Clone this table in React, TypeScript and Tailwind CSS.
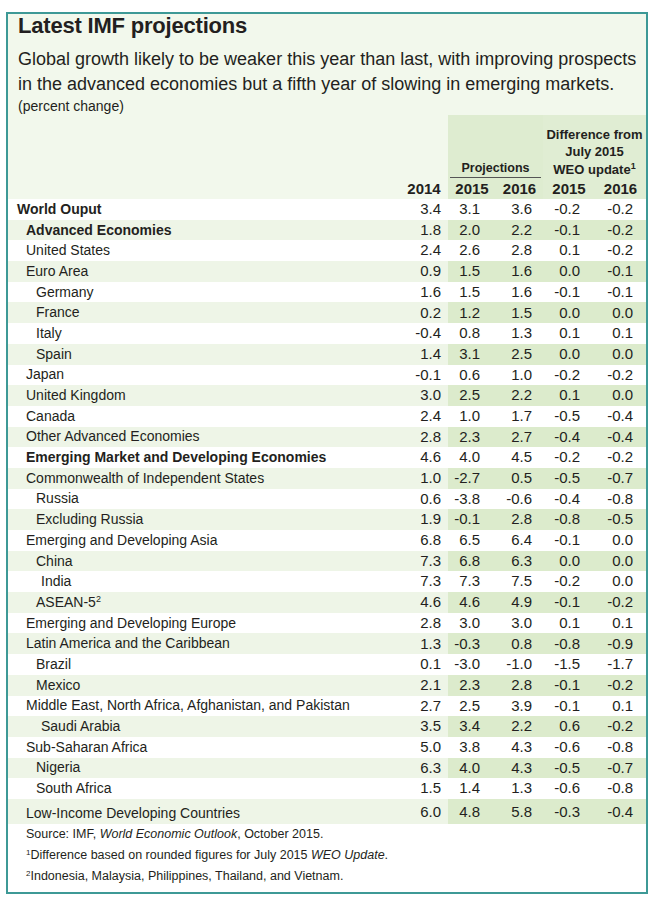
type Row = {
  label: string;
  level: 0 | 1 | 2 | 3;
  bold?: boolean;
  sup?: string;
  v: [string, string, string, string, string];
};

const rows: Row[] = [
  { label: 'World Ouput', level: 0, bold: true, v: ['3.4', '3.1', '3.6', '-0.2', '-0.2'] },
  { label: 'Advanced Economies', level: 1, bold: true, v: ['1.8', '2.0', '2.2', '-0.1', '-0.2'] },
  { label: 'United States', level: 1, v: ['2.4', '2.6', '2.8', '0.1', '-0.2'] },
  { label: 'Euro Area', level: 1, v: ['0.9', '1.5', '1.6', '0.0', '-0.1'] },
  { label: 'Germany', level: 2, v: ['1.6', '1.5', '1.6', '-0.1', '-0.1'] },
  { label: 'France', level: 2, v: ['0.2', '1.2', '1.5', '0.0', '0.0'] },
  { label: 'Italy', level: 2, v: ['-0.4', '0.8', '1.3', '0.1', '0.1'] },
  { label: 'Spain', level: 2, v: ['1.4', '3.1', '2.5', '0.0', '0.0'] },
  { label: 'Japan', level: 1, v: ['-0.1', '0.6', '1.0', '-0.2', '-0.2'] },
  { label: 'United Kingdom', level: 1, v: ['3.0', '2.5', '2.2', '0.1', '0.0'] },
  { label: 'Canada', level: 1, v: ['2.4', '1.0', '1.7', '-0.5', '-0.4'] },
  { label: 'Other Advanced Economies', level: 1, v: ['2.8', '2.3', '2.7', '-0.4', '-0.4'] },
  { label: 'Emerging Market and Developing Economies', level: 1, bold: true, v: ['4.6', '4.0', '4.5', '-0.2', '-0.2'] },
  { label: 'Commonwealth of Independent States', level: 1, v: ['1.0', '-2.7', '0.5', '-0.5', '-0.7'] },
  { label: 'Russia', level: 2, v: ['0.6', '-3.8', '-0.6', '-0.4', '-0.8'] },
  { label: 'Excluding Russia', level: 2, v: ['1.9', '-0.1', '2.8', '-0.8', '-0.5'] },
  { label: 'Emerging and Developing Asia', level: 1, v: ['6.8', '6.5', '6.4', '-0.1', '0.0'] },
  { label: 'China', level: 2, v: ['7.3', '6.8', '6.3', '0.0', '0.0'] },
  { label: 'India', level: 3, v: ['7.3', '7.3', '7.5', '-0.2', '0.0'] },
  { label: 'ASEAN-5', level: 2, sup: '2', v: ['4.6', '4.6', '4.9', '-0.1', '-0.2'] },
  { label: 'Emerging and Developing Europe', level: 1, v: ['2.8', '3.0', '3.0', '0.1', '0.1'] },
  { label: 'Latin America and the Caribbean', level: 1, v: ['1.3', '-0.3', '0.8', '-0.8', '-0.9'] },
  { label: 'Brazil', level: 2, v: ['0.1', '-3.0', '-1.0', '-1.5', '-1.7'] },
  { label: 'Mexico', level: 2, v: ['2.1', '2.3', '2.8', '-0.1', '-0.2'] },
  { label: 'Middle East, North Africa, Afghanistan, and Pakistan', level: 1, v: ['2.7', '2.5', '3.9', '-0.1', '0.1'] },
  { label: 'Saudi Arabia', level: 3, v: ['3.5', '3.4', '2.2', '0.6', '-0.2'] },
  { label: 'Sub-Saharan Africa', level: 1, v: ['5.0', '3.8', '4.3', '-0.6', '-0.8'] },
  { label: 'Nigeria', level: 2, v: ['6.3', '4.0', '4.3', '-0.5', '-0.7'] },
  { label: 'South Africa', level: 2, v: ['1.5', '1.4', '1.3', '-0.6', '-0.8'] },
  { label: 'Low-Income Developing Countries', level: 1, v: ['6.0', '4.8', '5.8', '-0.3', '-0.4'] },
];

const indent = ['pl-[9px]', 'pl-[18px]', 'pl-[28px]', 'pl-[33px]'];
const colW = ['w-[48px]', 'w-[48px]', 'w-[47px]', 'w-[52px]', 'w-[51px]'];
const colPad = ['pr-[7px]', 'pr-[16px]', 'pr-[11px]', 'pr-[15px]', 'pr-[13px]'];

export default function App() {
  return (
    <div className="min-h-screen bg-white pl-[6px] pt-[12px] font-['Liberation_Sans',Arial,sans-serif] text-[#231f20]">
      <div className="w-[642px] border-2 border-[#3d9996]">
        <div className="bg-[#f2f8ec] pl-[10px] pr-[2px]">
          <h1 className="text-[22px] font-bold leading-[24px] tracking-[-0.2px]">Latest IMF projections</h1>
          <p className="mt-[9px] text-[18px] leading-[25px]">
            Global growth likely to be weaker this year than last, with improving prospects
            <br />
            in the advanced economies but a fifth year of slowing in emerging markets.
          </p>
          <p className="text-[14px] leading-[18px]">(percent change)</p>
        </div>

        {/* header */}
        <div className="flex h-[84px] bg-[#f2f8ec] text-[15px] font-bold">
          <div className="w-[392px]" />
          <div className={`${colW[0]} flex flex-col justify-end`}>
            <div className="h-[21px] text-center leading-[21px]">2014</div>
          </div>
          <div className="flex w-[95px] flex-col justify-end bg-[#deecd0]">
            <div className="mx-[2px] border-b border-[#555] text-center text-[12.5px] leading-[17px]">Projections</div>
            <div className="flex">
              <div className={`${colW[1]} h-[21px] text-center leading-[21px]`}>2015</div>
              <div className={`${colW[2]} h-[21px] text-center leading-[21px]`}>2016</div>
            </div>
          </div>
          <div className="flex w-[103px] flex-col justify-end bg-[#e0edd3]">
            <div className="whitespace-nowrap text-center text-[13px] leading-[17.5px]">
              Difference from
              <br />
              July 2015
              <br />
              WEO update<sup className="text-[9px]">1</sup>
            </div>
            <div className="flex">
              <div className={`${colW[3]} h-[21px] text-center leading-[21px]`}>2015</div>
              <div className={`${colW[4]} h-[21px] text-center leading-[21px]`}>2016</div>
            </div>
          </div>
        </div>

        {/* rows */}
        <div>
          {rows.map((r, i) => {
            const shaded = i % 2 === 1;
            const last = i === rows.length - 1;
            return (
              <div
                key={r.label}
                className={`flex ${last ? 'h-[25px] items-end' : 'h-[20.7px] items-center'} ${shaded ? 'bg-[#eef5e7]' : 'bg-white'}`}
              >
                <div className={`w-[392px] whitespace-nowrap text-[14px] ${indent[r.level]} ${r.bold ? 'font-bold' : ''}`}>
                  {r.label}
                  {r.sup && <sup className="text-[9px]">{r.sup}</sup>}
                </div>
                {r.v.map((n, j) => (
                  <div
                    key={j}
                    className={`flex h-full justify-end ${last ? 'items-end' : 'items-center'} ${colW[j]} ${colPad[j]} text-[15px] ${
                      shaded && j > 0 ? 'bg-[#dcebcc]' : ''
                    }`}
                  >
                    {n}
                  </div>
                ))}
              </div>
            );
          })}
        </div>

        {/* notes */}
        <div className="bg-white px-[18px] pb-[5px] text-[12.5px] leading-[21px]">
          <p>
            Source: IMF, <i>World Economic Outlook</i>, October 2015.
          </p>
          <p>
            <sup className="text-[8px]">1</sup>Difference based on rounded figures for July 2015 <i>WEO Update</i>.
          </p>
          <p>
            <sup className="text-[8px]">2</sup>Indonesia, Malaysia, Philippines, Thailand, and Vietnam.
          </p>
        </div>
      </div>
    </div>
  );
}
